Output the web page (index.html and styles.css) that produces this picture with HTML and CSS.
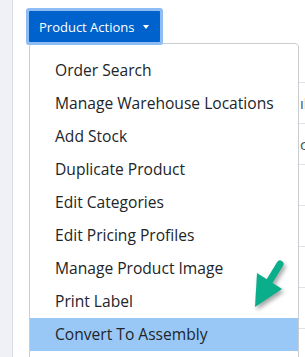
FILE: index.html
```html
<!DOCTYPE html>
<html>
<head>
<meta charset="utf-8">
<link rel="stylesheet" href="styles.css">
</head>
<body>
<div class="page">
  <aside class="sidebar"></aside>
  <main class="main">
    <div class="dropdown">
      <button class="btn">Product Actions<span class="caret"></span></button>
      <ul class="menu">
        <li>Order Search</li>
        <li>Manage Warehouse Locations</li>
        <li>Add Stock</li>
        <li>Duplicate Product</li>
        <li>Edit Categories</li>
        <li>Edit Pricing Profiles</li>
        <li>Manage Product Image</li>
        <li>Print Label</li>
        <li class="active">Convert To Assembly</li>
      </ul>
    </div>
    <div class="table">
      <div class="row"><span class="cell">ıl</span></div>
      <div class="row"><span class="cell">c</span></div>
      <div class="row"><span class="cell"></span></div>
      <div class="row"><span class="cell"></span></div>
      <div class="row"><span class="cell"></span></div>
      <div class="row"><span class="cell"></span></div>
      <div class="row"><span class="cell"></span></div>
    </div>
    <svg class="arrow" width="45" height="60" viewBox="0 0 45 60">
      <line x1="35" y1="9" x2="24" y2="27" stroke="#0bae8b" stroke-width="7" stroke-linecap="round"/>
      <polygon points="12,18 37,34 10,52" fill="#0bae8b"/>
    </svg>
  </main>
</div>
</body>
</html>
```

FILE: styles.css
```css
* { box-sizing: border-box; }
html, body { margin: 0; padding: 0; }
body {
  font-family: "Open Sans", "Noto Sans", sans-serif;
  background: #fff;
  color: #212529;
  width: 305px;
  height: 357px;
  overflow: hidden;
}
.page {
  display: flex;
  height: 357px;
}
.sidebar {
  width: 13px;
  flex: none;
  background: #eff1f6;
  border-right: 1px solid #dadde3;
}
.main {
  flex: 1;
  position: relative;
  overflow: hidden;
}
.dropdown {
  position: relative;
  margin: 11px 0 0 16px;
  width: 131px;
}
.btn {
  position: relative;
  z-index: 2;
  display: flex;
  align-items: center;
  width: 131px;
  height: 31px;
  padding: 0 0 0 10px;
  border: none;
  border-radius: 1px;
  background: #0062cc;
  color: #fff;
  font-family: "Open Sans", "Noto Sans", sans-serif;
  font-size: 13px;
  box-shadow: 0 0 0 3px #8ebcf4;
}
.caret {
  display: inline-block;
  margin-left: 9px;
  width: 0;
  height: 0;
  border-top: 4px solid #fff;
  border-left: 3.5px solid transparent;
  border-right: 3.5px solid transparent;
}
.menu {
  position: absolute;
  z-index: 1;
  top: 32px;
  left: 0;
  width: 270px;
  height: 340px;
  margin: 0;
  padding: 10px 0 0;
  list-style: none;
  background: #fff;
  border: 1px solid #c9cdd2;
  border-radius: 4px;
}
.menu li {
  height: 33px;
  line-height: 33px;
  padding-left: 25px;
  font-size: 15.6px;
  white-space: nowrap;
  color: #212529;
}
.menu li.active {
  background: #99c8f7;
}
.table {
  margin: 40px 0 0 240px;
}
.row {
  height: 41px;
  border-top: 1px solid #dee2e6;
  display: flex;
  align-items: center;
}
.cell {
  padding-left: 47px;
  font-size: 15px;
  color: #495057;
  white-space: nowrap;
}
.arrow {
  position: absolute;
  left: 232px;
  top: 255px;
  z-index: 3;
  filter: drop-shadow(2px 3px 2px rgba(0,0,0,0.35));
}
```
